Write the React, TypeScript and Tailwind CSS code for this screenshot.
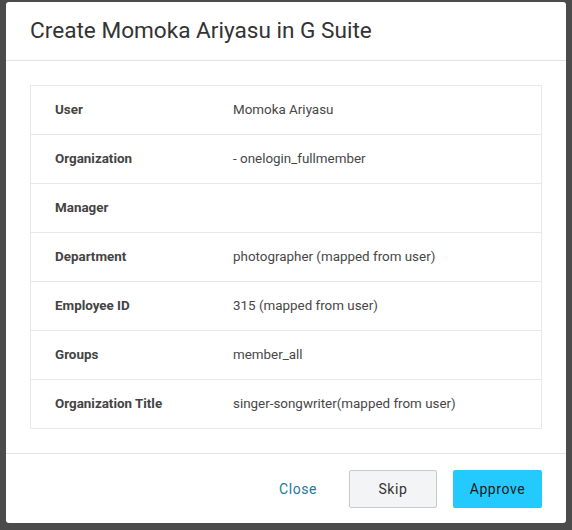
import React from 'react';

type Row = { label: string; value: string };

const rows: Row[] = [
  { label: 'User', value: 'Momoka Ariyasu' },
  { label: 'Organization', value: '- onelogin_fullmember' },
  { label: 'Manager', value: '' },
  { label: 'Department', value: 'photographer (mapped from user)' },
  { label: 'Employee ID', value: '315 (mapped from user)' },
  { label: 'Groups', value: 'member_all' },
  { label: 'Organization Title', value: 'singer-songwriter(mapped from user)' },
];

const App: React.FC = () => {
  return (
    <div
      className="w-[572px] h-[530px] bg-[#4a4b4a] pt-[2px] pl-[6px]"
      style={{ fontFamily: 'Roboto, "Liberation Sans", sans-serif' }}
    >
      <div className="w-[560px] h-[521px] bg-white rounded-[3px] flex flex-col">
        <div className="h-[59px] border-b border-[#e2e2e2] flex items-center px-[24px]">
          <h1 className="text-[22.6px] text-[#333] leading-none pt-[1px]">Create Momoka Ariyasu in G Suite</h1>
        </div>

        <div className="px-[24px] py-[24px] border-b border-[#e2e2e2]">
          <div className="border border-[#e8e8e8]">
            {rows.map((row, i) => (
              <div
                key={row.label}
                className={`flex items-center text-[13.4px] ${i > 0 ? 'h-[49px] border-t border-[#e8e8e8]' : 'h-[48px]'}`}
              >
                <div className="w-[202px] pl-[24px] font-bold text-[#444]">{row.label}</div>
                <div className="text-[#474747]">{row.value}</div>
              </div>
            ))}
          </div>
        </div>

        <div className="flex items-center justify-end gap-[16px] px-[24px] pt-[16px]">
          <button className="w-[70px] h-[37px] text-[14px] tracking-[0.6px] text-[#1b7aa0]">Close</button>
          <button className="w-[88px] h-[38px] text-[14px] tracking-[0.6px] text-[#333] bg-[#f2f4f5] border border-[#c8cbcc] rounded-[2px]">
            Skip
          </button>
          <button className="w-[89px] h-[38px] text-[14px] tracking-[0.6px] text-[#1a1a1a] bg-[#24c9fe] rounded-[2px]">
            Approve
          </button>
        </div>
      </div>
    </div>
  );
};

export default App;
